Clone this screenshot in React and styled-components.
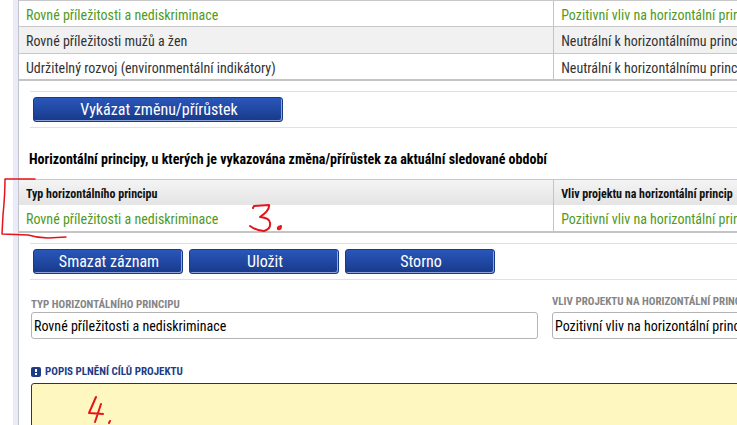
import React from "react";
import styled, { createGlobalStyle } from "styled-components";

const GlobalStyle = createGlobalStyle`
  * {
    box-sizing: border-box;
  }

  body {
    margin: 0;
    background: #fff;
    font-family: "Roboto Condensed", "Liberation Sans Narrow", Roboto, sans-serif;
    font-size: 14px;
    color: #333;
  }
`;

const Page = styled.div`
  position: relative;
  height: 100vh;
  padding-left: 13px;
  overflow: hidden;
`;

const Panel = styled.main`
  min-height: 100%;
  border-left: 5px solid #e9ebf8;
`;

const Content = styled.div`
  min-height: 100vh;
  border-left: 1px solid #c3c3cb;
`;

const Table = styled.table`
  width: 100%;
  table-layout: fixed;
  border-collapse: separate;
  border-spacing: 0;
  border-top: 1px solid #c8c8c8;
  border-bottom: 2px solid #c4c4c4;
`;

const HeadCell = styled.th`
  width: ${props => props.width || "auto"};
  height: 25px;
  padding: 2px 7px 0;
  overflow: hidden;
  background: linear-gradient(#f4f4f4, #e4e4e4);
  color: #111;
  font-size: 12px;
  line-height: 16px;
  text-align: left;
  white-space: nowrap;

  & + & {
    border-left: 1px solid #c4c4c4;
  }
`;

const Row = styled.tr`
  height: 25px;
  background: ${props => (props.$shaded ? "#f1f1f1" : "#fff")};
  color: ${props => (props.$active ? "#4f9a1e" : "#333")};

  & + & {
    height: 27px;
  }

  &:last-child {
    height: 26px;
  }
`;

const Cell = styled.td`
  width: ${props => props.width || "auto"};
  padding: 2px 7px 0;
  overflow: hidden;
  line-height: 18px;
  white-space: nowrap;

  & + & {
    border-left: 1px solid #c4c4c4;
  }

  ${Row} + ${Row} & {
    border-top: 1px solid #c8c8c8;
  }
`;

const Toolbar = styled.div`
  display: flex;
  gap: 6px;
  margin: 10px 0 0 11px;
  padding: 5px 3px;
  border-top: 1px solid #e0e0e6;
  border-bottom: 1px solid #e0e0e6;
`;

const Button = styled.button`
  width: ${props => (props.$wide ? 250 : 150)}px;
  height: 25px;
  padding: 0 0 0 2px;
  border: 1px solid #1b3a86;
  border-radius: 3px;
  background: linear-gradient(#2a57bb, #17398a);
  box-shadow: inset -1px -1px 0 #8ea3d6;
  color: #fff;
  font-family: inherit;
  font-size: 16px;
  line-height: 22px;
  cursor: pointer;
`;

const Heading = styled.h2`
  margin: 21px 0 10px 10px;
  color: #000;
  font-size: 14px;
  line-height: 20px;
  white-space: nowrap;
`;

const Form = styled.form`
  display: flex;
  flex-direction: column;
  gap: 26px;
  padding: 15px 0 0 12px;
`;

const Fields = styled.div`
  display: grid;
  grid-template-columns: 507fr 185fr;
  column-gap: 14px;
`;

const Field = styled.div`
  display: flex;
  flex-direction: column;
  justify-content: flex-end;
  min-width: 0;
  overflow: hidden;
`;

const Label = styled.label`
  display: flex;
  align-items: center;
  gap: 4px;
  padding-bottom: ${props => (props.$raised ? 3 : 0)}px;
  color: ${props => (props.$required ? "#1d3c86" : "#858585")};
  font-size: 11px;
  font-weight: bold;
  line-height: 14px;
  text-transform: uppercase;
  white-space: nowrap;
`;

const Input = styled.input`
  width: ${props => (props.$long ? "480px" : "100%")};
  height: 27px;
  padding: 0 2px;
  border: 1px solid #b4b4b4;
  border-radius: 3px;
  background: #fff;
  color: #000;
  font-family: inherit;
  font-size: 14px;
`;

const TextArea = styled.textarea`
  width: calc(100% + 10px);
  height: 120px;
  margin-top: 4px;
  border: 1px solid #26384f;
  border-radius: 3px;
  background: #fef8c0;
  font-family: inherit;
  font-size: 14px;
  resize: none;
`;

const Notes = styled.svg`
  position: absolute;
  top: 0;
  left: 0;
  pointer-events: none;
`;

const RequiredIcon = () => (
  <svg width="10" height="10" viewBox="0 0 10 10" aria-hidden="true">
    <rect width="10" height="10" rx="2" fill="#1d3c86" />
    <rect x="4" y="2" width="2" height="3" fill="#fff" />
    <rect x="4" y="6" width="2" height="2" fill="#fff" />
  </svg>
);

const principles = [
  {
    name: "Rovné příležitosti a nediskriminace",
    effect: "Pozitivní vliv na horizontální princip",
    active: true
  },
  {
    name: "Rovné příležitosti mužů a žen",
    effect: "Neutrální k horizontálnímu principu",
    shaded: true
  },
  {
    name: "Udržitelný rozvoj (environmentální indikátory)",
    effect: "Neutrální k horizontálnímu principu"
  }
];

const PrincipleRow = ({ item }) => (
  <Row $active={item.active} $shaded={item.shaded}>
    <Cell width="74.4%">{item.name}</Cell>
    <Cell>{item.effect}</Cell>
  </Row>
);

export default function App() {
  return (
    <Page>
      <GlobalStyle />
      <Panel>
        <Content>
          <Table>
            <tbody>
              {principles.map(item => (
                <PrincipleRow key={item.name} item={item} />
              ))}
            </tbody>
          </Table>
          <Toolbar>
            <Button type="button" $wide>
              Vykázat změnu/přírůstek
            </Button>
          </Toolbar>
          <Heading>
            Horizontální principy, u kterých je vykazována změna/přírůstek za
            aktuální sledované období
          </Heading>
          <Table>
            <thead>
              <tr>
                <HeadCell width="74.4%">Typ horizontálního principu</HeadCell>
                <HeadCell>Vliv projektu na horizontální princip</HeadCell>
              </tr>
            </thead>
            <tbody>
              <PrincipleRow item={principles[0]} />
            </tbody>
          </Table>
          <Toolbar>
            <Button type="button">Smazat záznam</Button>
            <Button type="button">Uložit</Button>
            <Button type="button">Storno</Button>
          </Toolbar>
          <Form>
            <Fields>
              <Field>
                <Label htmlFor="type">Typ horizontálního principu</Label>
                <Input id="type" defaultValue={principles[0].name} />
              </Field>
              <Field>
                <Label htmlFor="effect" $raised>
                  Vliv projektu na horizontální princip
                </Label>
                <Input
                  id="effect"
                  $long
                  defaultValue={principles[0].effect}
                />
              </Field>
            </Fields>
            <Field>
              <Label htmlFor="goals" $required>
                <RequiredIcon />
                Popis plnění cílů projektu
              </Label>
              <TextArea id="goals" />
            </Field>
          </Form>
        </Content>
      </Panel>
      <Notes
        width="300"
        height="425"
        fill="none"
        stroke="#e3151b"
        strokeWidth="2"
        strokeLinecap="round"
        strokeLinejoin="round"
        aria-hidden="true"
      >
        <path
          d="M35 179 L5 179 Q5 195 3 215 L2 234 L28 235 Q38 238 48 238 L66 237"
          strokeWidth="1.5"
        />
        <path d="M253 208 L254 206 L269 205 Q270 210 260 217 Q270 218 270 223 Q271 229 264 231 Q257 231 250 226" />
        <path d="M281 226 Q277 227 278 229 Q281 230 281 226" />
        <path d="M96 397 L89 413 L103 414 M101 404 L95 422 M110 421 L109 423" />
      </Notes>
    </Page>
  );
}
